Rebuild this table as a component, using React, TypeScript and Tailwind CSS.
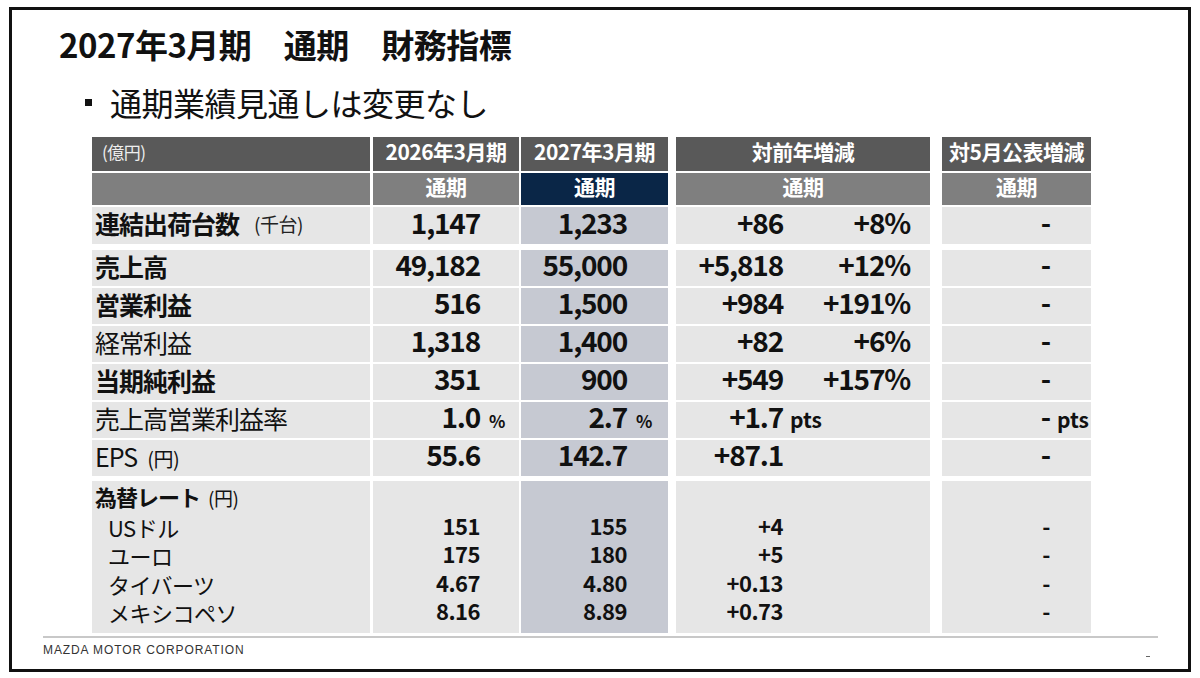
import type { ReactNode } from 'react';

type Row = {
  label: ReactNode;
  v26: string;
  v27: string;
  unit?: string;
  diff: string;
  diffUnit?: string;
  pct?: string;
  may: string;
  mayUnit?: string;
};

const rows: Row[] = [
  { label: <span className="font-bold">売上高</span>, v26: '49,182', v27: '55,000', diff: '+5,818', pct: '+12%', may: '-' },
  { label: <span className="font-bold">営業利益</span>, v26: '516', v27: '1,500', diff: '+984', pct: '+191%', may: '-' },
  { label: <span>経常利益</span>, v26: '1,318', v27: '1,400', diff: '+82', pct: '+6%', may: '-' },
  { label: <span className="font-bold">当期純利益</span>, v26: '351', v27: '900', diff: '+549', pct: '+157%', may: '-' },
  { label: <span>売上高営業利益率</span>, v26: '1.0', v27: '2.7', unit: '%', diff: '+1.7', diffUnit: 'pts', may: '-', mayUnit: 'pts' },
  {
    label: (
      <span>
        EPS<span className="text-[20px] ml-[10px] tracking-[-0.5px]">(円)</span>
      </span>
    ),
    v26: '55.6',
    v27: '142.7',
    diff: '+87.1',
    may: '-',
  },
];

const fx = [
  { name: 'USドル', v26: '151', v27: '155', diff: '+4' },
  { name: 'ユーロ', v26: '175', v27: '180', diff: '+5' },
  { name: 'タイバーツ', v26: '4.67', v27: '4.80', diff: '+0.13' },
  { name: 'メキシコペソ', v26: '8.16', v27: '8.89', diff: '+0.73' },
];

const num = 'text-[28px] font-bold tracking-[-1.2px]';
const unitCls = 'text-[17px] font-semibold';
const ptsCls = 'text-[21px] font-bold';

function DataRow({ r }: { r: Row }) {
  return (
    <div className="flex h-[36px]">
      <div className="w-[278px] bg-[#e6e6e6] pl-[3px] flex items-center pb-[2px] text-[25px] tracking-[-1px] text-[#111]">{r.label}</div>
      <div className="w-[146px] ml-[3px] bg-[#e6e6e6] flex items-center pb-[8px]">
        <div className="w-full grid grid-cols-[107px_1fr] items-baseline">
          <span className={`${num} text-right`}>{r.v26}</span>
          <span className={`pl-[9px] ${unitCls}`}>{r.unit}</span>
        </div>
      </div>
      <div className="w-[147px] ml-[2px] bg-[#c6c9d2] flex items-center pb-[8px]">
        <div className="w-full grid grid-cols-[106px_1fr] items-baseline">
          <span className={`${num} text-right`}>{r.v27}</span>
          <span className={`pl-[9px] ${unitCls}`}>{r.unit}</span>
        </div>
      </div>
      <div className="w-[254px] ml-[8px] bg-[#e6e6e6] flex items-center pb-[8px]">
        <div className="w-full grid grid-cols-[107px_1fr_auto] items-baseline pr-[20px]">
          <span className={`${num} text-right`}>{r.diff}</span>
          <span className={`pl-[7px] ${ptsCls}`}>{r.diffUnit}</span>
          <span className={num}>{r.pct}</span>
        </div>
      </div>
      <div className="w-[149px] ml-[12px] bg-[#e6e6e6] flex items-center pb-[8px]">
        <div className="w-full grid grid-cols-[108px_1fr] items-baseline">
          <span className={`${num} text-right`}>{r.may}</span>
          <span className={`pl-[7px] ${ptsCls}`}>{r.mayUnit}</span>
        </div>
      </div>
    </div>
  );
}

export default function App() {
  return (
    <div className="w-[1200px] h-[678px] bg-white overflow-hidden font-['Noto_Sans_CJK_JP',sans-serif] text-[#111]">
      <div className="ml-[9px] mt-[7px] w-[1182px] h-[665px] border-[3px] border-[#111] flex flex-col">
        <h1 className="ml-[47px] mt-[14px] h-[40px] flex items-center text-[33px] font-bold tracking-[-0.5px] leading-none">
          2027年3月期　通期　財務指標
        </h1>
        <div className="ml-[73px] mt-[20px] h-[36px] flex items-center text-[32px] tracking-[-0.5px] leading-none">
          <span className="w-[7px] h-[7px] bg-[#111] mr-[18px]" />
          通期業績見通しは変更なし
        </div>

        <div className="ml-[80px] mt-[17px] flex flex-col">
          {/* header 1 */}
          <div className="flex h-[34px] text-white text-[21px] font-bold tracking-[-0.5px]">
            <div className="w-[278px] bg-[#595959] pl-[10px] pb-[4px] flex items-center text-[17px] font-normal text-[#eee]">(億円)</div>
            <div className="w-[146px] ml-[3px] bg-[#595959] pb-[5px] flex items-center justify-center">2026年3月期</div>
            <div className="w-[147px] ml-[2px] bg-[#595959] pb-[5px] flex items-center justify-center">2027年3月期</div>
            <div className="w-[254px] ml-[8px] bg-[#595959] pb-[5px] flex items-center justify-center">対前年増減</div>
            <div className="w-[149px] ml-[12px] bg-[#595959] pb-[5px] flex items-center justify-center">対5月公表増減</div>
          </div>
          {/* header 2 */}
          <div className="flex h-[32px] mt-[2px] text-white text-[21px] font-bold tracking-[-0.5px]">
            <div className="w-[278px] bg-[#7f7f7f]" />
            <div className="w-[146px] ml-[3px] bg-[#7f7f7f] pb-[4px] flex items-center justify-center">通期</div>
            <div className="w-[147px] ml-[2px] bg-[#0a2647] pb-[4px] flex items-center justify-center">通期</div>
            <div className="w-[254px] ml-[8px] bg-[#7f7f7f] pb-[4px] flex items-center justify-center">通期</div>
            <div className="w-[149px] ml-[12px] bg-[#7f7f7f] pb-[4px] flex items-center justify-center">通期</div>
          </div>

          {/* shipments */}
          <div className="flex h-[37px] mt-[2px]">
            <div className="w-[278px] bg-[#e6e6e6] pl-[3px] pb-[3px] flex items-center">
              <span className="text-[25px] font-bold tracking-[-1px]">連結出荷台数</span>
              <span className="ml-[15px] text-[19px] tracking-[-0.5px] text-[#222]">(千台)</span>
            </div>
            <div className="w-[146px] ml-[3px] bg-[#e6e6e6] flex items-center pb-[8px]">
              <span className={`${num} w-[107px] text-right`}>1,147</span>
            </div>
            <div className="w-[147px] ml-[2px] bg-[#c6c9d2] flex items-center pb-[8px]">
              <span className={`${num} w-[106px] text-right`}>1,233</span>
            </div>
            <div className="w-[254px] ml-[8px] bg-[#e6e6e6] flex items-center pb-[8px] pr-[20px]">
              <span className={`${num} w-[107px] text-right`}>+86</span>
              <span className={`${num} ml-auto`}>+8%</span>
            </div>
            <div className="w-[149px] ml-[12px] bg-[#e6e6e6] flex items-center pb-[8px]">
              <span className={`${num} w-[108px] text-right`}>-</span>
            </div>
          </div>

          <div className="mt-[6px] flex flex-col gap-[2px]">
            {rows.map((r, i) => (
              <DataRow key={i} r={r} />
            ))}
          </div>

          {/* exchange rates */}
          <div className="flex h-[152px] mt-[5px] text-[22px] tracking-[-0.5px] leading-[28.5px]">
            <div className="w-[278px] bg-[#e6e6e6] pl-[3px] pt-[1px]">
              <div>
                <span className="font-bold tracking-[-1px]">為替レート</span>
                <span className="ml-[8px] text-[19px]">(円)</span>
              </div>
              {fx.map((f) => (
                <div key={f.name} className="pl-[13px] text-[22px]">{f.name}</div>
              ))}
            </div>
            <div className="w-[146px] ml-[3px] bg-[#e6e6e6] pt-[1px] font-bold">
              <div className="h-[28.5px]" />
              {fx.map((f) => (
                <div key={f.name} className="w-[107px] text-right">{f.v26}</div>
              ))}
            </div>
            <div className="w-[147px] ml-[2px] bg-[#c6c9d2] pt-[1px] font-bold">
              <div className="h-[28.5px]" />
              {fx.map((f) => (
                <div key={f.name} className="w-[106px] text-right">{f.v27}</div>
              ))}
            </div>
            <div className="w-[254px] ml-[8px] bg-[#e6e6e6] pt-[1px] font-bold">
              <div className="h-[28.5px]" />
              {fx.map((f) => (
                <div key={f.name} className="w-[107px] text-right">{f.diff}</div>
              ))}
            </div>
            <div className="w-[149px] ml-[12px] bg-[#e6e6e6] pt-[1px] font-bold">
              <div className="h-[28.5px]" />
              {fx.map((f) => (
                <div key={f.name} className="w-[108px] text-right">-</div>
              ))}
            </div>
          </div>
        </div>

        {/* footer */}
        <div className="ml-[31px] mt-[3px] w-[1115px] h-[2px] bg-[#c8c8c8]" />
        <div className="ml-[31px] mt-[3px] flex items-center justify-between w-[1115px]">
          <span className="font-['Liberation_Sans',sans-serif] text-[12px] tracking-[0.9px] text-[#333]">MAZDA MOTOR CORPORATION</span>
          <span className="mt-[12px] mr-[8px] w-[4px] h-[1px] bg-[#666]" />
        </div>
      </div>
    </div>
  );
}
